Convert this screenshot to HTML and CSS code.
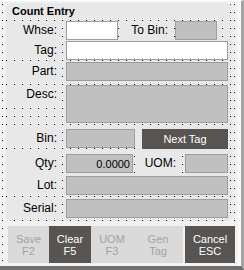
FILE: index.html
```html
<!DOCTYPE html>
<html lang="en">
<head>
  <meta charset="UTF-8" />
  <meta name="viewport" content="width=device-width, initial-scale=1.0"/>
  <title>Count Entry</title>
  <link rel="stylesheet" href="styles.css">
</head>
<body>

  <div class="frame">
    <div class="panel">
      <div class="title">Count Entry</div>

      <div class="row">
        <label class="lbl">Whse:</label>
        <input type="text" class="field white whse">
        <label class="lbl lbl-tobin">To Bin:</label>
        <input type="text" class="field tobin" readonly>
      </div>

      <div class="row row-tag">
        <label class="lbl">Tag:</label>
        <input type="text" class="field white grow">
      </div>

      <div class="row row-part">
        <label class="lbl">Part:</label>
        <input type="text" class="field grow" readonly>
      </div>

      <div class="row row-desc">
        <label class="lbl">Desc:</label>
        <textarea class="field grow desc" readonly></textarea>
      </div>

      <div class="row row-bin">
        <label class="lbl">Bin:</label>
        <input type="text" class="field bin" readonly>
        <button class="next-tag">Next Tag</button>
      </div>

      <div class="row row-qty">
        <label class="lbl">Qty:</label>
        <input type="text" class="field qty" value="0.0000" readonly>
        <label class="lbl lbl-uom">UOM:</label>
        <input type="text" class="field uom" readonly>
      </div>

      <div class="row row-lot">
        <label class="lbl">Lot:</label>
        <input type="text" class="field grow" readonly>
      </div>

      <div class="row row-serial">
        <label class="lbl">Serial:</label>
        <input type="text" class="field grow" readonly>
      </div>
    </div>

    <div class="keys">
      <div class="keybar">
        <button class="key" disabled>Save<br>F2</button>
        <button class="key on">Clear<br>F5</button>
        <button class="key" disabled>UOM<br>F3</button>
        <button class="key gen" disabled>Gen<br>Tag</button>
      </div>
      <button class="key on cancel">Cancel<br>ESC</button>
    </div>
  </div>

</body>
</html>
```

FILE: styles.css
```css
* {
  box-sizing: border-box;
}

body {
  margin: 0;
  font-family: "Liberation Sans", Arial, sans-serif;
  font-size: 12px;
  color: #000;
  background: #f2f2f2;
}

/* design grid: one dark pixel every 8px */
.frame,
.panel {
  background-image: conic-gradient(at 1px 1px, transparent 75%, #000 0);
  background-size: 8px 8px;
}

.frame {
  width: 244px;
  height: 270px;
  padding: 2px 0 0 6px;
  background-color: #f2f2f2;
  background-position: 2px 3px;
  border-top: 1px solid #fff;
  border-right: 3px solid #a4a4a4;
  border-bottom: 4px solid #6e6e6e;
  box-shadow: inset -3px 0 #fafafa;
}

.panel {
  width: 227px;
  height: 218px;
  padding-right: 5px;
  background-color: #e8e8e8;
  background-position: 0 1px;
  border-radius: 6px;
}

.title {
  height: 17px;
  padding: 2px 0 0 6px;
  line-height: 13px;
  font-size: 11px;
  font-weight: bold;
  background: #e8e8e8;
  border-radius: 6px 6px 0 0;
}

.row {
  display: flex;
  align-items: flex-start;
  margin-top: 1px;
}

.row-part { margin-top: 2px; }
.row-desc { margin-top: 4px; }
.row-bin { margin-top: 6px; }
.row-qty { margin-top: 5px; }
.row-lot { margin-top: 3px; }
.row-serial { margin-top: 4px; }

.lbl {
  width: 56px;
  height: 19px;
  padding-right: 5px;
  line-height: 19px;
  text-align: right;
  background: #e8e8e8;
  flex-shrink: 0;
}

.field {
  height: 19px;
  margin: 0;
  padding: 0 2px;
  border: 1px solid #9d9d9d;
  background: #c0c0c0;
  font-family: "Liberation Sans", Arial, sans-serif;
  font-size: 11px;
  color: #000;
  outline: none;
}

.field.white {
  background: #fff;
}

.lbl + .field {
  margin-left: 4px;
}

.grow {
  flex: 1;
  min-width: 0;
}

.whse {
  width: 52px;
  margin-right: 1px;
}

.lbl-tobin {
  width: 55px;
  padding-right: 6px;
}

.lbl-tobin + .field,
.lbl-uom + .field {
  margin-left: 1px;
}

.tobin {
  width: 42px;
}

.desc {
  height: 38px;
  resize: none;
}

.bin {
  width: 69px;
}

.next-tag {
  width: 86px;
  height: 20px;
  margin-left: auto;
  padding: 0;
  border: none;
  background: #575452;
  color: #fff;
  font-family: "Liberation Sans", Arial, sans-serif;
  font-size: 11px;
}

.qty {
  width: 67px;
  text-align: right;
}

.lbl-uom {
  width: 47px;
  margin-left: 2px;
  padding-right: 6px;
}

.uom {
  margin-left: auto !important;
  width: 43px;
}

.keys {
  display: flex;
  margin: 5px 0 0 2px;
}

.keybar {
  display: flex;
  width: 175px;
  height: 37px;
  background: #dadada;
}

.key {
  width: 42px;
  height: 37px;
  padding: 0;
  border: none;
  background: #dadada;
  color: #a3a3a3;
  font-family: "Liberation Sans", Arial, sans-serif;
  font-size: 11px;
  line-height: 12px;
}

.key:first-child {
  width: 41px;
}

.key.gen {
  width: 50px;
}

.key.on {
  background: #575452;
  color: #fff;
}

.key.cancel {
  width: 50px;
  margin-left: 2px;
}
```
